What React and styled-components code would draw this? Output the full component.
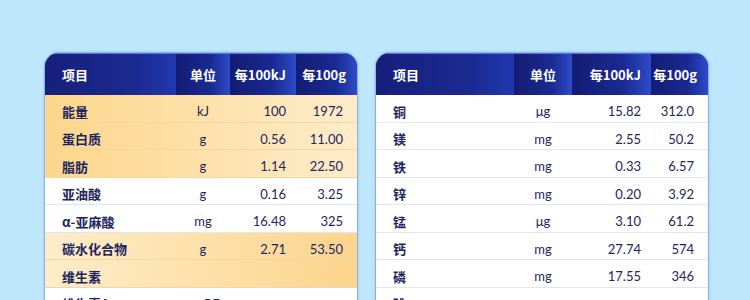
import React from "react";
import styled, { createGlobalStyle } from "styled-components";

const GlobalStyle = createGlobalStyle`
  html, body {
    margin: 0;
    padding: 0;
    background: #bfe7fb;
    overflow: hidden;
  }
  body {
    font-family: "Noto Sans CJK SC", "Noto Sans", sans-serif;
  }
`;

const Page = styled.div`
  display: flex;
  align-items: flex-start;
  gap: 17px;
  padding: 52px 0 0 44px;
  height: 300px;
  box-sizing: border-box;
  overflow: hidden;
`;

const Card = styled.div`
  box-sizing: border-box;
  width: ${(p) => p.$width}px;
  background: #fff;
  border: 1px solid #86b4e2;
  border-bottom: none;
  border-radius: 15px 15px 0 0;
  overflow: hidden;
  box-shadow: 0 0 3px rgba(60, 110, 180, 0.25);
  flex-shrink: 0;
`;

const Row = styled.div`
  display: grid;
  grid-template-columns: ${(p) => p.$cols};
  align-items: center;
  height: 27.5px;
  padding-top: 6px;
  box-sizing: border-box;
  border-bottom: 1px solid ${(p) => (p.$tone ? "#f1d7a4" : "#e2e6ee")};
  background: ${(p) =>
    p.$tone === "warm"
      ? "linear-gradient(90deg, #fdd68b 0%, #fde2ad 55%, #feecca 100%)"
      : p.$tone === "warm2"
      ? "linear-gradient(90deg, #feecca 0%, #fde1aa 50%, #fcd48c 100%)"
      : "#fff"};
`;

const HeadRow = styled.div`
  display: grid;
  grid-template-columns: ${(p) => p.$cols};
  height: 41px;
  border-top: 1px solid #5b78d6;
  background: #18237f;
`;

const HeadCell = styled.div`
  display: flex;
  align-items: center;
  justify-content: ${(p) => p.$justify || "center"};
  padding: 0 ${(p) => p.$pad || 0}px 0 ${(p) => p.$padLeft || 0}px;
  color: #fff;
  font-size: 13px;
  font-weight: 700;
  background: ${(p) =>
    p.$first
      ? "linear-gradient(90deg, #161f7a 0%, #1b2a92 70%, #2238b0 100%)"
      : "linear-gradient(90deg, #141c74 0%, #1a2a92 65%, #2d4bc9 100%)"};
`;

const Item = styled.div`
  padding-left: 17px;
  font-size: 13px;
  font-weight: 700;
  color: #1d2660;
`;

const Unit = styled.div`
  text-align: center;
  font-family: "Lato", "Open Sans", sans-serif;
  font-size: 13px;
  color: #1d2660;
`;

const Num = styled.div`
  text-align: right;
  padding-right: ${(p) => p.$pad}px;
  font-family: "Lato", "Open Sans", sans-serif;
  font-size: 13px;
  color: #1d2660;
`;

const leftCols = "131px 54px 66px 61px";
const rightCols = "138px 58px 79px 57px";

const leftRows = [
  ["能量", "kJ", "100", "1972", "warm"],
  ["蛋白质", "g", "0.56", "11.00", "warm"],
  ["脂肪", "g", "1.14", "22.50", "warm"],
  ["亚油酸", "g", "0.16", "3.25"],
  ["α-亚麻酸", "mg", "16.48", "325"],
  ["碳水化合物", "g", "2.71", "53.50", "warm2"],
  ["维生素", "", "", "", "warm2"],
  ["维生素A", "μg RE", "", ""],
];

const rightRows = [
  ["铜", "μg", "15.82", "312.0"],
  ["镁", "mg", "2.55", "50.2"],
  ["铁", "mg", "0.33", "6.57"],
  ["锌", "mg", "0.20", "3.92"],
  ["锰", "μg", "3.10", "61.2"],
  ["钙", "mg", "27.74", "574"],
  ["磷", "mg", "17.55", "346"],
  ["碘", "", "", ""],
];

const Table = ({ width, cols, rows }) => (
  <Card $width={width}>
    <HeadRow $cols={cols}>
      <HeadCell $first $justify="flex-start" $padLeft={17}>
        项目
      </HeadCell>
      <HeadCell>单位</HeadCell>
      <HeadCell $justify="flex-end" $pad={10}>
        每100kJ
      </HeadCell>
      <HeadCell $justify="flex-end" $pad={11}>
        每100g
      </HeadCell>
    </HeadRow>
    {rows.map(([name, unit, kj, g, tone]) => (
      <Row key={name} $cols={cols} $tone={tone}>
        <Item>{name}</Item>
        <Unit>{unit}</Unit>
        <Num $pad={10}>{kj}</Num>
        <Num $pad={14}>{g}</Num>
      </Row>
    ))}
  </Card>
);

export default function App() {
  return (
    <>
      <GlobalStyle />
      <Page>
        <Table width={314} cols={leftCols} rows={leftRows} />
        <Table width={334} cols={rightCols} rows={rightRows} />
      </Page>
    </>
  );
}
